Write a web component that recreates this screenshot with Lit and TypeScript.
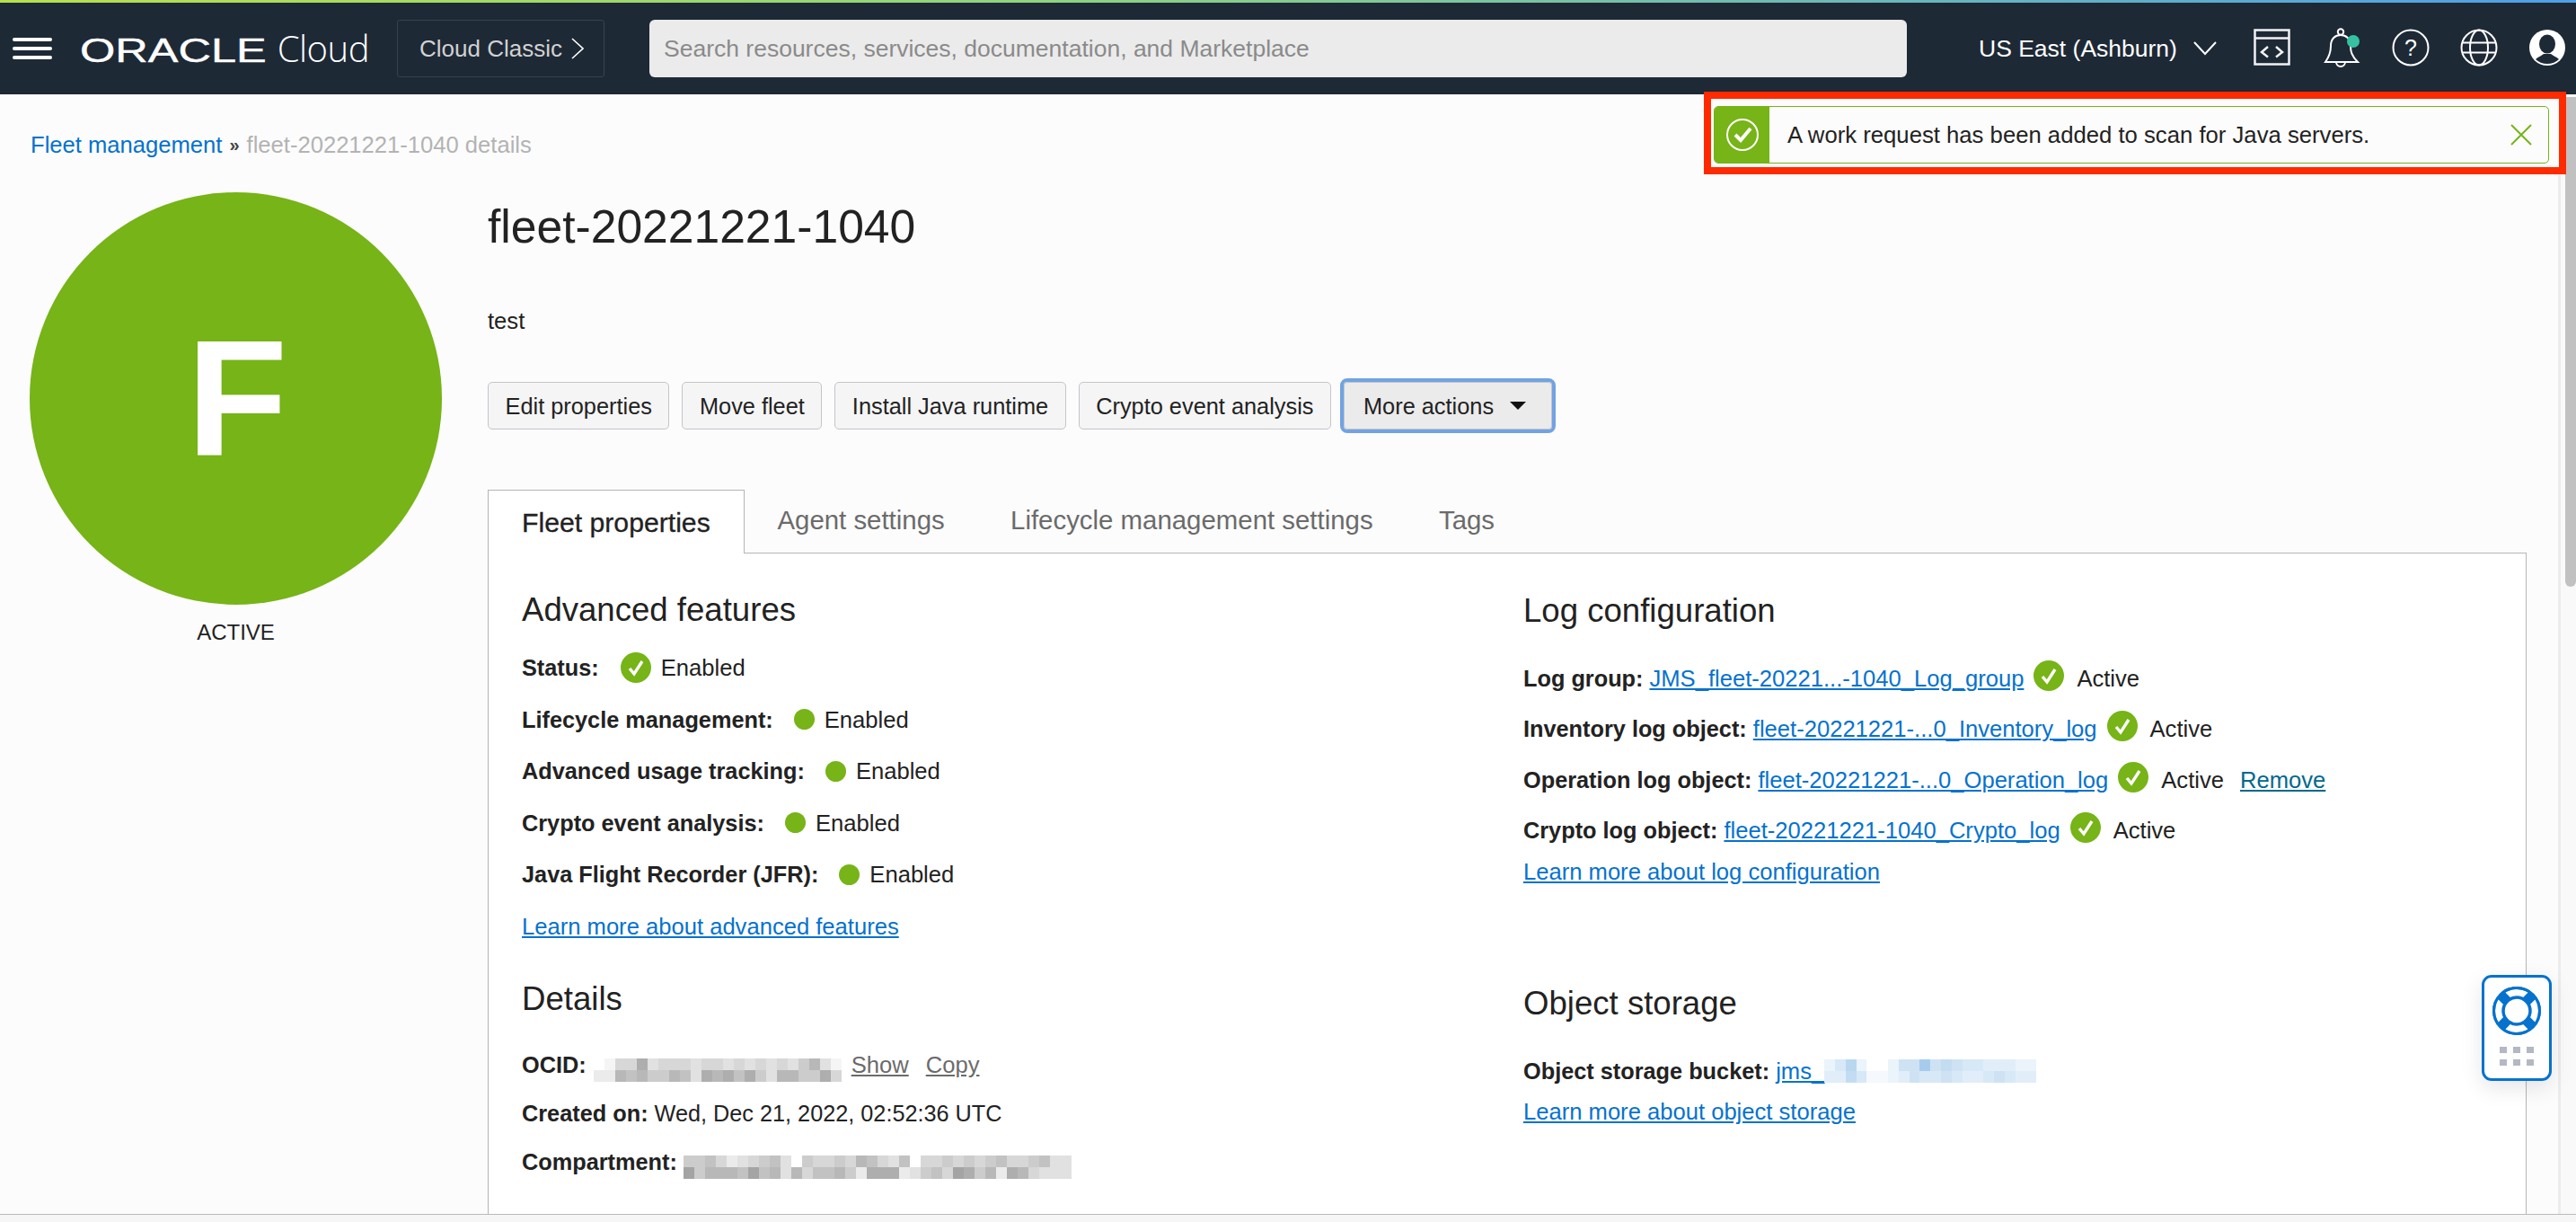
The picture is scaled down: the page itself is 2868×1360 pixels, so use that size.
import { LitElement, css, html, nothing } from "lit";
import { customElement } from "lit/decorators.js";

// redacted strings in the shot are mosaics, digit = how dark the cell is
const OCID = ["01448344434434343435731", "22767557638786853775584"];
const COMPARTMENT = ["556423456305445476436044545456445633", "957776967374667528882356498572874333"];
const BUCKET = ["24720025595654433322", "33641123544543345433"];

const mix = (d: string, base: number[]) =>
  `rgb(${base.map((c) => Math.round(255 - ((255 - c) * Number(d)) / 9)).join(",")})`;

const mosaic = (rows: string[], base: number[], w = 12) => html`
  <span class="mosaic">
    ${rows.map(
      (r) => html`<span class="mosaic-row">
        ${[...r].map((d) => html`<i style="width:${w}px;background:${mix(d, base)}"></i>`)}
      </span>`,
    )}
  </span>
`;

const check = html`
  <svg class="ok" viewBox="0 0 34 34">
    <circle cx="17" cy="17" r="17" fill="#76b417"></circle>
    <path d="M10 18l5 6 9-14" fill="none" stroke="#fff" stroke-width="3.4"></path>
  </svg>
`;

const FEATURES = [
  { label: "Lifecycle management:" },
  { label: "Advanced usage tracking:" },
  { label: "Crypto event analysis:" },
  { label: "Java Flight Recorder (JFR):" },
];

const LOGS = [
  { label: "Log group:", link: "JMS_fleet-20221...-1040_Log_group" },
  { label: "Inventory log object:", link: "fleet-20221221-...0_Inventory_log" },
  { label: "Operation log object:", link: "fleet-20221221-...0_Operation_log", remove: true },
  { label: "Crypto log object:", link: "fleet-20221221-1040_Crypto_log" },
];

@customElement("app-root")
export class AppRoot extends LitElement {
  static styles = css`
    :host {
      display: block;
      position: relative;
      width: 2868px;
      height: 1360px;
      overflow: hidden;
      background: #fcfcfc;
      color: #222;
      font-family: "Liberation Sans", Arial, sans-serif;
      font-size: 25.6px;
      line-height: 34px;
    }
    a {
      color: #0572ce;
    }
    .topline {
      height: 3px;
      background: linear-gradient(90deg, #b6e04e 0%, #8fd47f 40%, #4f9fe8 100%);
    }
    header {
      display: flex;
      align-items: center;
      height: 102px;
      background: #1e2936;
      color: #fff;
    }
    .burger {
      display: flex;
      flex-direction: column;
      gap: 6px;
      width: 44px;
      margin-left: 14px;
    }
    .burger i {
      height: 4px;
      border-radius: 2px;
      background: #fff;
    }
    .logo {
      display: flex;
      align-items: baseline;
      width: 322px;
      height: 56px;
      margin-left: 31px;
      line-height: 56px;
      white-space: nowrap;
    }
    .oracle {
      display: inline-block;
      width: 208px;
      font-size: 37px;
      -webkit-text-stroke: 0.4px #fff;
      transform: scaleX(1.365);
      transform-origin: left center;
    }
    .cloud {
      margin-left: 12px;
      font-family: "Open Sans", sans-serif;
      font-size: 40px;
      font-weight: 300;
      letter-spacing: -0.5px;
    }
    .classic {
      display: flex;
      align-items: center;
      gap: 10px;
      box-sizing: border-box;
      width: 231px;
      height: 64px;
      margin-left: 31px;
      padding-left: 24px;
      border: 1px solid #38424f;
      border-radius: 3px;
      color: #d2d2d2;
      font-size: 26px;
    }
    .search {
      display: flex;
      align-items: center;
      box-sizing: border-box;
      width: 1400px;
      height: 64px;
      margin-left: 50px;
      padding-left: 16px;
      border-radius: 6px;
      background: #ebebeb;
      color: #8a8a8a;
      font-size: 26.5px;
    }
    .region {
      display: flex;
      align-items: center;
      gap: 18px;
      margin-left: 80px;
      font-size: 26.5px;
    }
    .tools {
      display: flex;
      align-items: center;
      margin: -2px 0 0 41px;
    }
    .tools svg {
      display: block;
    }
    .tools .bell {
      margin-left: 34px;
    }
    .tools .mid {
      margin-left: 33px;
    }
    .tools .last {
      margin-left: 34px;
    }
    .tools text {
      fill: #fff;
      font-family: "Liberation Sans", Arial, sans-serif;
      font-size: 25px;
    }
    .page {
      display: flex;
      height: 1246px;
    }
    .content {
      flex: 1;
      min-width: 0;
      overflow: hidden;
      padding: 40px 0 0 33px;
    }
    .crumbs {
      display: flex;
      align-items: center;
      gap: 8px;
      height: 32px;
      margin-left: 1px;
      color: #b3b3b3;
    }
    .crumbs a {
      text-decoration: none;
    }
    .crumbs b {
      color: #444;
      font-size: 20px;
    }
    .body {
      display: flex;
      gap: 51px;
      margin-top: 37px;
    }
    .side {
      flex: none;
      width: 459px;
      text-align: center;
    }
    .avatar {
      display: flex;
      align-items: center;
      justify-content: center;
      box-sizing: border-box;
      width: 459px;
      height: 459px;
      padding: 0 0 3px 3px;
      border-radius: 50%;
      background: #76b417;
      color: #fff;
      font-size: 184px;
      font-weight: 700;
      line-height: 1;
    }
    .state {
      margin-top: 14px;
      font-size: 24px;
    }
    .main {
      flex: none;
      width: 2270px;
      padding-top: 8px;
    }
    h1 {
      margin: 0;
      font-size: 51.6px;
      font-weight: 400;
      line-height: 60px;
    }
    .desc {
      margin: 58px 0 0;
    }
    .actions {
      display: flex;
      gap: 14px;
      margin-top: 51px;
      height: 53px;
      font-size: 25.35px;
    }
    .btn {
      display: flex;
      align-items: center;
      box-sizing: border-box;
      height: 53px;
      padding: 0 18.5px;
      border: 1px solid #c4c4cc;
      border-radius: 5px;
      background: #f5f5f5;
      white-space: nowrap;
    }
    .btn.more {
      gap: 18px;
      padding: 0 28px 0 21px;
      background: #ebebeb;
      outline: 4px solid #71a3e2;
      outline-offset: 0;
      border-radius: 4px;
    }
    .caret {
      width: 0;
      height: 0;
      border-left: 9px solid transparent;
      border-right: 9px solid transparent;
      border-top: 9px solid #111;
    }
    .tabs {
      display: flex;
      height: 70px;
      margin-top: 67px;
      position: relative;
      z-index: 1;
      color: #6b6b6b;
      font-size: 29.4px;
    }
    .tab {
      display: flex;
      align-items: center;
      padding: 0 36.7px 3px;
      white-space: nowrap;
    }
    .tab.on {
      box-sizing: border-box;
      height: 71px;
      padding: 2px 37px 0;
      border: 1px solid #b5b5b5;
      border-bottom: 0;
      background: #fff;
      color: #222;
      font-size: 30.2px;
      -webkit-text-stroke: 0.3px #222;
    }
    .panel {
      display: grid;
      grid-template-columns: 1115px 1fr;
      box-sizing: border-box;
      height: 800px;
      padding: 41px 0 0 37px;
      border: 1px solid #b5b5b5;
      background: #fff;
    }
    h2 {
      margin: 0;
      font-size: 36.6px;
      font-weight: 400;
      line-height: 44px;
    }
    .rows {
      margin-top: 25px;
    }
    .row {
      display: flex;
      align-items: center;
      height: 34px;
      margin-bottom: 23.5px;
      white-space: nowrap;
    }
    .row b {
      font-size: 25.3px;
      font-weight: 700;
    }
    .row .gap {
      margin-left: 24px;
    }
    .row .dot.gap {
      margin-left: 23px;
    }
    .ok {
      display: block;
      flex: none;
      width: 34px;
      height: 34px;
    }
    .dot {
      flex: none;
      width: 23px;
      height: 23px;
      border-radius: 50%;
      background: #76b417;
    }
    .mark {
      margin-right: 11px;
    }
    .details {
      margin-top: 42px;
    }
    .details .row {
      margin-bottom: 20px;
    }
    .details .rows {
      margin-top: 34px;
    }
    .muted {
      color: #6b6b6b;
    }
    .ocid-blur {
      margin: 0 11px 0 8px;
    }
    .copy {
      margin-left: 19px;
    }
    .comp-blur {
      margin-left: 7px;
    }
    .created {
      font-size: 25.25px;
    }
    .mosaic {
      display: inline-flex;
      flex-direction: column;
    }
    .mosaic-row {
      display: flex;
      height: 13px;
    }
    .mosaic-row i {
      display: block;
      flex: none;
    }
    .logs {
      padding-top: 1px;
    }
    .logs .rows {
      margin-top: 36px;
    }
    .logs .row {
      margin-bottom: 22.4px;
    }
    .logs .row .ok {
      margin: -6px 14px 0 11px;
    }
    .logs .row a {
      margin-left: 7px;
    }
    .logs .row a.plain {
      margin-left: 18px;
      color: #00688c;
    }
    .logs .row a.flush {
      margin-left: 0;
    }
    .logs .after {
      margin-top: -11px;
    }
    .storage {
      margin-top: 108px;
    }
    .storage .rows {
      margin-top: 36px;
    }
    .storage .row {
      margin-bottom: 11px;
    }
    .scrollbar {
      flex: none;
      box-sizing: border-box;
      width: 20px;
      border-left: 3px solid #ececec;
      background: #f9f9f9;
      padding: 3px 0 0 5px;
    }
    .thumb {
      height: 545px;
      border-radius: 0 0 10px 10px;
      background: #c1c1c1;
    }
    footer {
      box-sizing: border-box;
      height: 9px;
      border-top: 1px solid #b9b9c0;
      background: #f6f6f6;
    }
    .annotation {
      position: absolute;
      left: 1897px;
      top: 102px;
      box-sizing: border-box;
      width: 960px;
      height: 92px;
      padding: 0 11px 0 0;
      border: 8px solid #ff2a00;
      background: #fcfcfc;
    }
    .toast {
      display: flex;
      align-items: center;
      box-sizing: border-box;
      height: 64px;
      margin: 8px 0 0 3px;
      border: 1px solid #76b417;
      border-radius: 5px;
      background: #fcfcfc;
      overflow: hidden;
    }
    .toast-mark {
      display: flex;
      align-items: center;
      justify-content: center;
      flex: none;
      width: 61px;
      height: 100%;
      background: #76b417;
    }
    .toast span {
      flex: 1;
      margin-left: 20px;
      font-size: 25.7px;
    }
    .toast .close {
      flex: none;
      margin-right: 18px;
    }
    .help {
      position: absolute;
      left: 2763px;
      top: 1085px;
      display: flex;
      flex-direction: column;
      align-items: center;
      box-sizing: border-box;
      width: 78px;
      height: 118px;
      padding-top: 9px;
      border: 3px solid #0572ce;
      border-radius: 11px;
      background: #fff;
      box-shadow: 0 8px 24px rgba(0, 0, 0, 0.1);
    }
    .grip {
      display: grid;
      grid-template-columns: repeat(3, 8px);
      gap: 7px 7px;
      margin-top: 12px;
    }
    .grip i {
      height: 7px;
      background: #b4b8c2;
    }
  `;

  render() {
    return html`
      <div class="topline"></div>
      <header>
        <div class="burger"><i></i><i></i><i></i></div>
        <div class="logo">
          <span class="oracle">ORACLE</span>
          <span class="cloud">Cloud</span>
        </div>
        <div class="classic">
          Cloud Classic
          <svg width="14" height="24" viewBox="0 0 14 24">
            <path d="M1 1l12 11L1 23" fill="none" stroke="#fff" stroke-width="1.6"></path>
          </svg>
        </div>
        <div class="search">Search resources, services, documentation, and Marketplace</div>
        <div class="region">
          US East (Ashburn)
          <svg width="26" height="16" viewBox="0 0 26 16">
            <path d="M1 1l12 13L25 1" fill="none" stroke="#fff" stroke-width="2"></path>
          </svg>
        </div>
        <div class="tools">
          <svg width="42" height="42" viewBox="0 0 42 42">
            <g fill="none" stroke="#f2f2f2" stroke-width="2.5">
              <rect x="1.5" y="1.5" width="38" height="38"></rect>
              <path d="M1.5 10.5h38"></path>
              <path d="M16 20l-7 6 7 5.5M25 20l7 6-7 5.5"></path>
            </g>
          </svg>
          <svg class="bell" width="45" height="48" viewBox="0 0 45 48">
            <g fill="none" stroke="#fff" stroke-width="2">
              <circle cx="21" cy="6.5" r="3.2"></circle>
              <path d="M4 40c5-7 6-12 6-18 0-8 5-12 11-12s11 4 11 12c0 6 1 11 8 18z"></path>
              <path d="M16 40a5 5 0 0 0 10 0"></path>
            </g>
            <circle cx="35" cy="17" r="7" fill="#36c2a2"></circle>
          </svg>
          <svg class="mid" width="42" height="42" viewBox="0 0 42 42">
            <circle cx="21" cy="21" r="19.5" fill="none" stroke="#fff" stroke-width="2"></circle>
            <text x="21" y="30" text-anchor="middle">?</text>
          </svg>
          <svg class="last" width="42" height="42" viewBox="0 0 42 42">
            <g fill="none" stroke="#fff" stroke-width="2">
              <circle cx="21" cy="21" r="19.5"></circle>
              <ellipse cx="21" cy="21" rx="10" ry="19.5"></ellipse>
              <path d="M3 15.5h36M3 26.5h36"></path>
            </g>
          </svg>
          <svg class="last" width="42" height="42" viewBox="0 0 42 42">
            <circle cx="21" cy="21" r="20" fill="#fff"></circle>
            <ellipse cx="21" cy="17" rx="9" ry="10.5" fill="#1e2936"></ellipse>
            <path d="M8 34c3-3 7-4 9-6h8c2 2 6 3 9 6-3 3-8 5-13 5s-10-2-13-5z" fill="#1e2936"></path>
          </svg>
        </div>
      </header>

      <div class="page">
        <div class="content">
          <nav class="crumbs">
            <a href="#">Fleet management</a><b>»</b>
            <span>fleet-20221221-1040 details</span>
          </nav>
          <div class="body">
            <div class="side">
              <div class="avatar">F</div>
              <div class="state">ACTIVE</div>
            </div>
            <div class="main">
              <h1>fleet-20221221-1040</h1>
              <p class="desc">test</p>
              <div class="actions">
                <div class="btn">Edit properties</div>
                <div class="btn">Move fleet</div>
                <div class="btn">Install Java runtime</div>
                <div class="btn">Crypto event analysis</div>
                <div class="btn more">More actions <span class="caret"></span></div>
              </div>
              <div class="tabs">
                <div class="tab on">Fleet properties</div>
                <div class="tab">Agent settings</div>
                <div class="tab">Lifecycle management settings</div>
                <div class="tab">Tags</div>
              </div>
              <div class="panel">
                ${this.renderLeft()} ${this.renderRight()}
              </div>
            </div>
          </div>
        </div>
        <div class="scrollbar"><div class="thumb"></div></div>
      </div>
      <footer></footer>

      <div class="annotation">
        <div class="toast">
          <div class="toast-mark">
            <svg width="38" height="38" viewBox="0 0 38 38">
              <circle cx="19" cy="19" r="17" fill="none" stroke="#fff" stroke-width="2"></circle>
              <path d="M11 19l6 6 11-13" fill="none" stroke="#fff" stroke-width="4"></path>
            </svg>
          </div>
          <span>A work request has been added to scan for Java servers.</span>
          <svg class="close" width="24" height="24" viewBox="0 0 24 24">
            <path d="M1 1l22 22M23 1L1 23" stroke="#76b417" stroke-width="2"></path>
          </svg>
        </div>
      </div>

      <div class="help">
        <svg width="56" height="56" viewBox="0 0 56 56">
          <circle cx="28" cy="28" r="25.5" fill="#fff" stroke="#0572ce" stroke-width="3"></circle>
          <path d="M10 10l36 36M46 10L10 46" stroke="#0572ce" stroke-width="11"></path>
          <circle cx="28" cy="28" r="25.5" fill="none" stroke="#0572ce" stroke-width="3"></circle>
          <circle cx="28" cy="28" r="15" fill="#fff" stroke="#0572ce" stroke-width="3.5"></circle>
        </svg>
        <div class="grip"><i></i><i></i><i></i><i></i><i></i><i></i></div>
      </div>
    `;
  }

  renderLeft() {
    return html`
      <div>
        <h2>Advanced features</h2>
        <div class="rows">
          <div class="row">
            <b>Status:</b>
            <span class="gap mark">${check}</span>
            Enabled
          </div>
          ${FEATURES.map(
            (f) => html`
              <div class="row">
                <b>${f.label}</b>
                <span class="gap dot mark"></span>
                Enabled
              </div>
            `,
          )}
          <div class="row"><a href="#">Learn more about advanced features</a></div>
        </div>
        <div class="details">
          <h2>Details</h2>
          <div class="rows">
            <div class="row">
              <b>OCID:</b>
              <span class="ocid-blur">${mosaic(OCID, [164, 164, 164])}</span>
              <a class="muted" href="#">Show</a>
              <a class="muted copy" href="#">Copy</a>
            </div>
            <div class="row">
              <b>Created on:</b><span class="created">&nbsp;Wed, Dec 21, 2022, 02:52:36 UTC</span>
            </div>
            <div class="row">
              <b>Compartment:</b>
              <span class="comp-blur">${mosaic(COMPARTMENT, [164, 164, 164])}</span>
            </div>
          </div>
        </div>
      </div>
    `;
  }

  renderRight() {
    return html`
      <div class="logs">
        <h2>Log configuration</h2>
        <div class="rows">
          ${LOGS.map(
            (l) => html`
              <div class="row">
                <b>${l.label}</b>
                <a href="#">${l.link}</a>
                ${check} Active
                ${l.remove ? html`<a class="plain" href="#">Remove</a>` : nothing}
              </div>
            `,
          )}
          <div class="row after"><a class="flush" href="#">Learn more about log configuration</a></div>
        </div>
        <div class="storage">
          <h2>Object storage</h2>
          <div class="rows">
            <div class="row">
              <b>Object storage bucket:</b>
              <a href="#">jms_</a>
              ${mosaic(BUCKET, [166, 203, 236], 11.8)}
            </div>
            <div class="row"><a class="flush" href="#">Learn more about object storage</a></div>
          </div>
        </div>
      </div>
    `;
  }
}
